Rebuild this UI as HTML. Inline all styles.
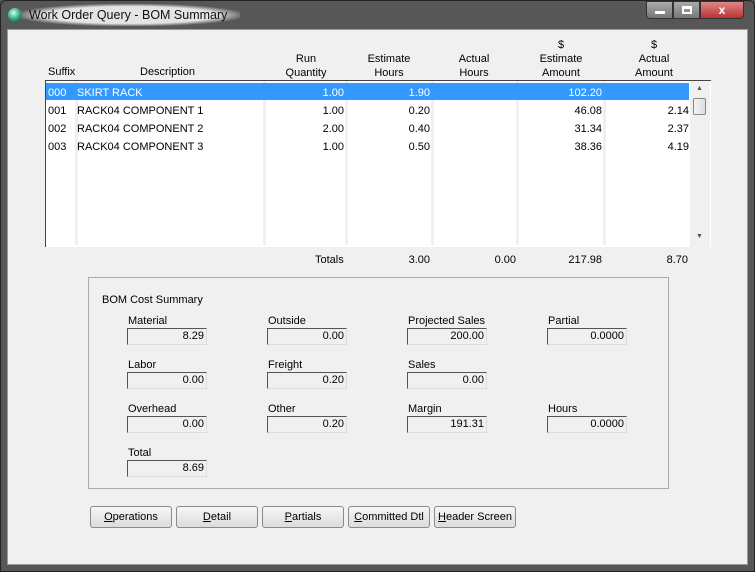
<!DOCTYPE html><html><head><style>
*{margin:0;padding:0;box-sizing:border-box}
body{width:755px;height:572px;background:#575757;position:relative;overflow:hidden;font-family:"Liberation Sans",sans-serif;font-size:11px;color:#000}
.a{position:absolute}
.r{text-align:right}.c{text-align:center}
.client{left:7px;top:29px;width:741px;height:536px;background:#f0f0f0;border:1px solid #9a9a9a}
.col{position:absolute;top:0;height:164px;background:#f0f0f0;width:3px}
.fld{position:absolute;width:80px;height:17px;border-top:1px solid #555;border-left:1px solid #555;border-bottom:1px solid #ddd;border-right:1px solid #ddd;text-align:right;padding-right:2px;line-height:15px}
.lbl{position:absolute}
.btn{position:absolute;top:506px;height:22px;border:1px solid #8a8a8a;border-radius:3px;background:linear-gradient(#f6f6f6,#dcdcdc);text-align:center;line-height:20px;font-size:11px}
</style></head><body>
<div class="a" style="left:0;top:0;width:755px;height:572px;border:1px solid #222;border-radius:6px 6px 0 0"></div>
<div class="a" style="left:20px;top:4px;width:220px;height:22px;background:radial-gradient(ellipse at center,rgba(235,235,235,.95) 55%,rgba(235,235,235,0) 75%)"></div>
<div class="a" style="left:8px;top:8px;width:14px;height:14px;border-radius:50%;background:radial-gradient(circle at 40% 35%,#cfe,#3a7 50%,#142 100%)"></div>
<div class="a" style="left:29px;top:8px;font-size:12.5px;color:#111">Work Order Query - BOM Summary</div>
<div class="a" style="left:646px;top:1px;width:27px;height:18px;border:1px solid #333;border-radius:0 0 0 4px;background:linear-gradient(#aaa,#777)"><div class="a" style="left:8px;top:9px;width:10px;height:3px;background:#fff"></div></div>
<div class="a" style="left:673px;top:1px;width:27px;height:18px;border:1px solid #333;background:linear-gradient(#aaa,#777)"><div class="a" style="left:8px;top:4px;width:10px;height:8px;border:2px solid #fff;border-top-width:3px"></div></div>
<div class="a" style="left:700px;top:1px;width:44px;height:18px;border:1px solid #333;border-radius:0 0 4px 0;background:linear-gradient(#d88,#b33);color:#fff;font-weight:bold;font-size:12px;text-align:center;line-height:16px">x</div>
<div class="a client"></div>
<div class="a c" style="left:48px;top:66px">Suffix</div>
<div class="a" style="left:140px;top:66px">Description</div>
<div class="a c" style="left:275px;top:52px;width:62px;line-height:14px">Run<br>Quantity</div>
<div class="a c" style="left:358px;top:52px;width:62px;line-height:14px">Estimate<br>Hours</div>
<div class="a c" style="left:443px;top:52px;width:62px;line-height:14px">Actual<br>Hours</div>
<div class="a c" style="left:530px;top:38px;width:62px;line-height:14px">$<br>Estimate<br>Amount</div>
<div class="a c" style="left:623px;top:38px;width:62px;line-height:14px">$<br>Actual<br>Amount</div>
<div class="a" style="left:45px;top:80px;width:666px;height:167px;border-top:1px solid #444;border-left:1px solid #444;background:#fff">
<div class="col" style="left:29px"></div><div class="col" style="left:217px"></div><div class="col" style="left:299px"></div><div class="col" style="left:385px"></div><div class="col" style="left:470px"></div><div class="col" style="left:557px"></div>
<div class="a" style="left:644px;top:0;width:20px;height:166px;background:#f0f0f0"><div class="a" style="left:6px;top:4px;font-size:7px;color:#555">▲</div><div class="a" style="left:6px;top:152px;font-size:7px;color:#555">▼</div><div class="a" style="left:3px;top:17px;width:13px;height:17px;border:1px solid #888;border-radius:2px;background:linear-gradient(90deg,#f4f4f4,#ddd)"></div></div>
<div class="a" style="left:0;top:2px;width:643px;height:17px;background:#3399ff"></div>
</div>
<div class="a" style="left:48px;top:84px;line-height:18px;color:#fff">000<br><span style="color:#000">001<br>002<br>003</span></div>
<div class="a" style="left:77px;top:84px;line-height:18px;color:#fff">SKIRT RACK<br><span style="color:#000">RACK04 COMPONENT 1<br>RACK04 COMPONENT 2<br>RACK04 COMPONENT 3</span></div>
<div class="a r" style="left:280px;top:84px;width:64px;line-height:18px;color:#fff">1.00<br><span style="color:#000">1.00<br>2.00<br>1.00</span></div>
<div class="a r" style="left:360px;top:84px;width:70px;line-height:18px;color:#fff">1.90<br><span style="color:#000">0.20<br>0.40<br>0.50</span></div>
<div class="a r" style="left:530px;top:84px;width:72px;line-height:18px;color:#fff">102.20<br><span style="color:#000">46.08<br>31.34<br>38.36</span></div>
<div class="a r" style="left:620px;top:84px;width:69px;line-height:18px">&nbsp;<br>2.14<br>2.37<br>4.19</div>
<div class="a" style="left:315px;top:254px">Totals</div>
<div class="a r" style="left:380px;top:254px;width:50px">3.00</div>
<div class="a r" style="left:466px;top:254px;width:50px">0.00</div>
<div class="a r" style="left:542px;top:254px;width:60px">217.98</div>
<div class="a r" style="left:628px;top:254px;width:60px">8.70</div>
<div class="a" style="left:88px;top:277px;width:581px;height:212px;border:1px solid #aaa"></div>
<div class="a" style="left:102px;top:294px">BOM Cost Summary</div>
<div class="lbl" style="left:128px;top:315px">Material</div><div class="fld" style="left:127px;top:328px">8.29</div>
<div class="lbl" style="left:128px;top:359px">Labor</div><div class="fld" style="left:127px;top:372px">0.00</div>
<div class="lbl" style="left:128px;top:403px">Overhead</div><div class="fld" style="left:127px;top:416px">0.00</div>
<div class="lbl" style="left:128px;top:447px">Total</div><div class="fld" style="left:127px;top:460px">8.69</div>
<div class="lbl" style="left:268px;top:315px">Outside</div><div class="fld" style="left:267px;top:328px">0.00</div>
<div class="lbl" style="left:268px;top:359px">Freight</div><div class="fld" style="left:267px;top:372px">0.20</div>
<div class="lbl" style="left:268px;top:403px">Other</div><div class="fld" style="left:267px;top:416px">0.20</div>
<div class="lbl" style="left:408px;top:315px">Projected Sales</div><div class="fld" style="left:407px;top:328px">200.00</div>
<div class="lbl" style="left:408px;top:359px">Sales</div><div class="fld" style="left:407px;top:372px">0.00</div>
<div class="lbl" style="left:408px;top:403px">Margin</div><div class="fld" style="left:407px;top:416px">191.31</div>
<div class="lbl" style="left:548px;top:315px">Partial</div><div class="fld" style="left:547px;top:328px">0.0000</div>
<div class="lbl" style="left:548px;top:403px">Hours</div><div class="fld" style="left:547px;top:416px">0.0000</div>
<div class="btn" style="left:90px;width:82px"><u>O</u>perations</div>
<div class="btn" style="left:176px;width:82px"><u>D</u>etail</div>
<div class="btn" style="left:262px;width:82px"><u>P</u>artials</div>
<div class="btn" style="left:348px;width:82px"><u>C</u>ommitted Dtl</div>
<div class="btn" style="left:434px;width:82px"><u>H</u>eader Screen</div>
</body></html>
